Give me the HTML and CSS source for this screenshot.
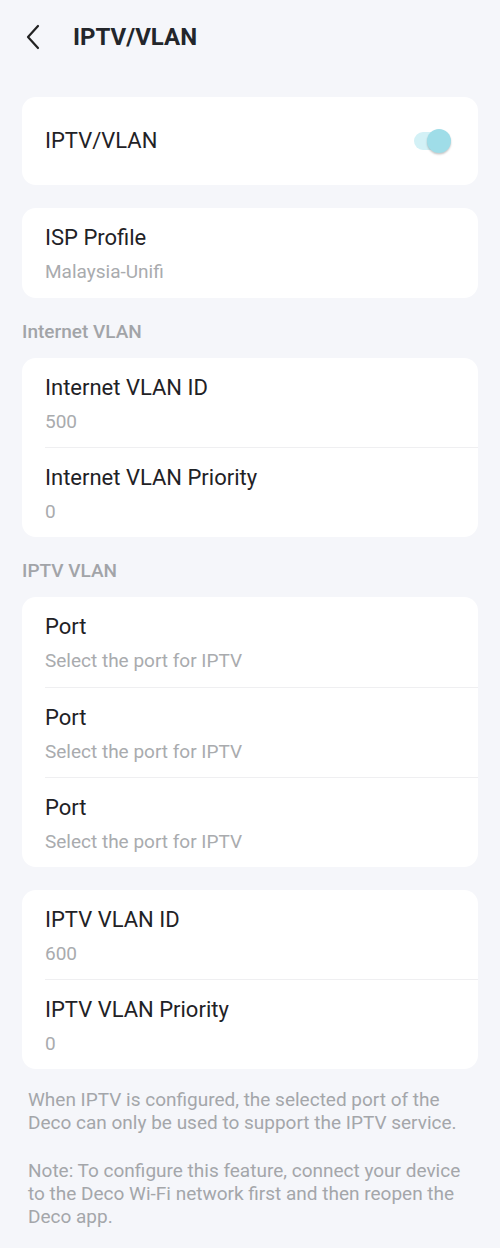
FILE: index.html
```html
<!DOCTYPE html>
<html>
<head>
<meta charset="utf-8">
<link rel="stylesheet" href="styles.css">
</head>
<body>
<div class="page">
  <header class="topbar">
    <svg class="back" width="16" height="26" viewBox="0 0 16 26"><path d="M13 2 L3 13 L13 24" fill="none" stroke="#222" stroke-width="2.2" stroke-linecap="round" stroke-linejoin="round"/></svg>
    <h1 class="title">IPTV/VLAN</h1>
  </header>

  <div class="card toggle-card">
    <span class="row-title">IPTV/VLAN</span>
    <span class="switch"><span class="track"></span><span class="knob"></span></span>
  </div>

  <div class="card">
    <div class="row"><div class="row-title">ISP Profile</div><div class="row-sub">Malaysia-Unifi</div></div>
  </div>

  <div class="section-label">Internet VLAN</div>
  <div class="card">
    <div class="row"><div class="row-title">Internet VLAN ID</div><div class="row-sub">500</div></div>
    <div class="row"><div class="row-title">Internet VLAN Priority</div><div class="row-sub">0</div></div>
  </div>

  <div class="section-label">IPTV VLAN</div>
  <div class="card">
    <div class="row"><div class="row-title">Port</div><div class="row-sub">Select the port for IPTV</div></div>
    <div class="row"><div class="row-title">Port</div><div class="row-sub">Select the port for IPTV</div></div>
    <div class="row"><div class="row-title">Port</div><div class="row-sub">Select the port for IPTV</div></div>
  </div>

  <div class="card">
    <div class="row"><div class="row-title">IPTV VLAN ID</div><div class="row-sub">600</div></div>
    <div class="row"><div class="row-title">IPTV VLAN Priority</div><div class="row-sub">0</div></div>
  </div>

  <div class="notes">
    <p>When IPTV is configured, the selected port of the Deco can only be used to support the IPTV service.</p>
    <p>Note: To configure this feature, connect your device to the Deco Wi-Fi network first and then reopen the Deco app.</p>
  </div>
</div>
</body>
</html>
```

FILE: styles.css
```css
* { box-sizing: border-box; }
html, body { margin: 0; padding: 0; }
body {
  background: #f5f6fa;
  font-family: Roboto, "Noto Sans", sans-serif;
  color: #1f2226;
  width: 500px;
  height: 1248px;
  overflow: hidden;
}
.page { padding: 0 22px; }
.topbar {
  display: flex;
  align-items: center;
  height: 74px;
  padding-left: 3px;
}
.back { margin-right: 32px; }
.title {
  margin: 0;
  font-size: 24px;
  font-weight: 700;
  color: #23262b;
}
.card {
  background: #fff;
  border-radius: 14px;
  margin-top: 23px;
  padding-left: 23px;
}
.toggle-card {
  height: 88px;
  display: flex;
  align-items: center;
  justify-content: space-between;
  padding-right: 26px;
}
.switch { position: relative; width: 42px; height: 26px; display: block; }
.track {
  position: absolute;
  left: 4px; top: 4px;
  width: 32px; height: 18px;
  border-radius: 9px;
  background: #d3f1f6;
}
.knob {
  position: absolute;
  left: 17px; top: 1px;
  width: 24px; height: 24px;
  border-radius: 50%;
  background: #9fdde8;
  box-shadow: 0 1.5px 2px rgba(0,0,0,0.22);
}
.row {
  padding: 16px 0 14px;
  height: 90px;
  border-top: 1px solid #efeff1;
}
.row:first-child { border-top: none; height: 89.5px; }
.row-title {
  font-size: 22px;
  line-height: 28px;
  color: #1f2226;
}
.row-sub {
  margin-top: 8px;
  font-size: 19px;
  line-height: 24px;
  color: #a9abae;
}
.section-label {
  margin-top: 22px;
  font-size: 19px;
  font-weight: 500;
  line-height: 24px;
  color: #a2a4a8;
  margin-bottom: -9px;
}
.notes { padding: 7px 6px 0; }
.notes p {
  margin: 12px 0 0;
  font-size: 19px;
  line-height: 23px;
  color: #a4a6aa;
}
.notes p + p { margin-top: 25px; }
```
